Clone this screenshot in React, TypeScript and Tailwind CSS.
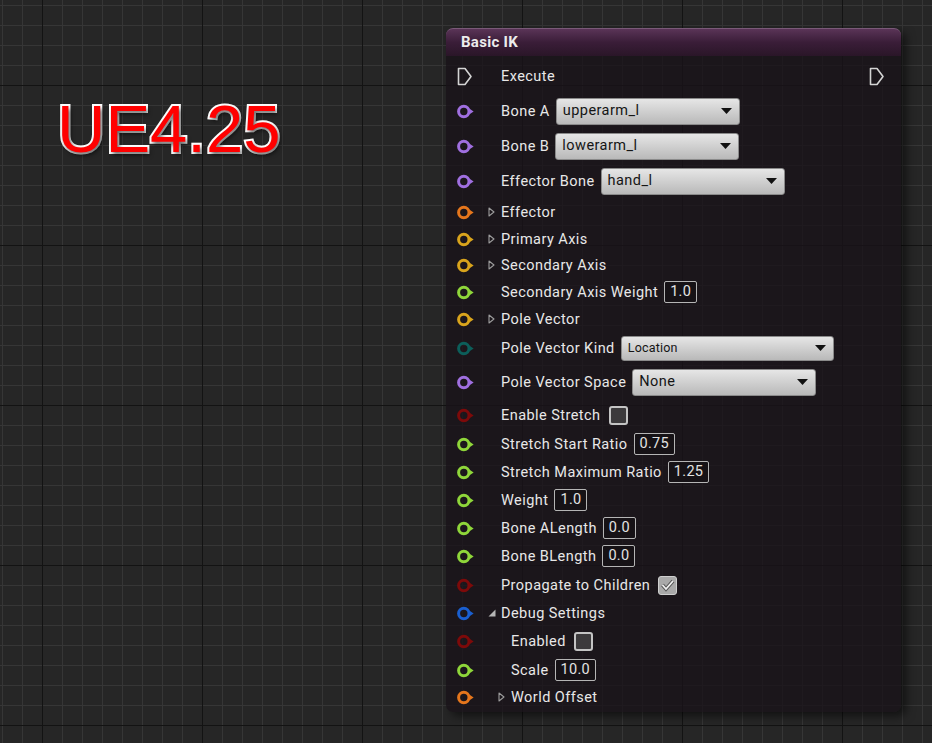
import React from "react"

type Row =
  | { kind: "exec" }
  | { kind: "enum"; label: string; value: string; color: string; w: number; h: number; small?: boolean; rowH: number }
  | { kind: "struct"; label: string; color: string; rowH: number; indent?: number; open?: boolean }
  | { kind: "num"; label: string; value: string; color: string; rowH: number; indent?: number }
  | { kind: "bool"; label: string; checked: boolean; color: string; rowH: number; indent?: number }

const PURPLE = "#a06fe0"
const ORANGE = "#e5761c"
const GOLD = "#d9a41c"
const GREEN = "#8fd63a"
const TEAL = "#0c5e5a"
const RED = "#7d0a0a"
const BLUE = "#1a5fd0"

const rows: Row[] = [
  { kind: "exec" },
  { kind: "enum", label: "Bone A", value: "upperarm_l", color: PURPLE, w: 184, h: 27, rowH: 34 },
  { kind: "enum", label: "Bone B", value: "lowerarm_l", color: PURPLE, w: 184, h: 27, rowH: 36 },
  { kind: "enum", label: "Effector Bone", value: "hand_l", color: PURPLE, w: 184, h: 27, rowH: 34 },
  { kind: "struct", label: "Effector", color: ORANGE, rowH: 28 },
  { kind: "struct", label: "Primary Axis", color: GOLD, rowH: 26 },
  { kind: "struct", label: "Secondary Axis", color: GOLD, rowH: 26 },
  { kind: "num", label: "Secondary Axis Weight", value: "1.0", color: GREEN, rowH: 28 },
  { kind: "struct", label: "Pole Vector", color: GOLD, rowH: 26 },
  { kind: "enum", label: "Pole Vector Kind", value: "Location", color: TEAL, w: 213, h: 25, small: true, rowH: 32 },
  { kind: "enum", label: "Pole Vector Space", value: "None", color: PURPLE, w: 184, h: 27, rowH: 36 },
  { kind: "bool", label: "Enable Stretch", checked: false, color: RED, rowH: 30 },
  { kind: "num", label: "Stretch Start Ratio", value: "0.75", color: GREEN, rowH: 28 },
  { kind: "num", label: "Stretch Maximum Ratio", value: "1.25", color: GREEN, rowH: 28 },
  { kind: "num", label: "Weight", value: "1.0", color: GREEN, rowH: 28 },
  { kind: "num", label: "Bone ALength", value: "0.0", color: GREEN, rowH: 28 },
  { kind: "num", label: "Bone BLength", value: "0.0", color: GREEN, rowH: 28 },
  { kind: "bool", label: "Propagate to Children", checked: true, color: RED, rowH: 30 },
  { kind: "struct", label: "Debug Settings", color: BLUE, rowH: 26, open: true },
  { kind: "bool", label: "Enabled", checked: false, color: RED, rowH: 30, indent: 10 },
  { kind: "num", label: "Scale", value: "10.0", color: GREEN, rowH: 28, indent: 10 },
  { kind: "struct", label: "World Offset", color: ORANGE, rowH: 26, indent: 10 },
]

function Pin({ color }: { color: string }) {
  return (
    <svg width="19" height="15" viewBox="0 0 19 15">
      <circle cx="6.8" cy="7.5" r="5.2" fill="none" stroke={color} strokeWidth="3" />
      <path d="M12.6 4.8 L16.6 7.5 L12.6 10.2 Z" fill={color} />
    </svg>
  )
}

function ExecPin() {
  return (
    <svg width="16" height="19" viewBox="0 0 16 19">
      <path d="M1.5 1.5 H8 L14 9.5 L8 17.5 H1.5 Z" fill="none" stroke="#d4d4d4" strokeWidth="1.6" strokeLinejoin="round" />
    </svg>
  )
}

function Expander({ open }: { open?: boolean }) {
  if (open) {
    return (
      <svg width="8" height="8" viewBox="0 0 8 8">
        <path d="M7.5 0.5 V7.5 H0.5 Z" fill="#b5b5b5" />
      </svg>
    )
  }
  return (
    <svg width="7" height="10" viewBox="0 0 7 10">
      <path d="M1 1 L6 5 L1 9 Z" fill="none" stroke="#9c9c9c" strokeWidth="1.1" strokeLinejoin="round" />
    </svg>
  )
}

function Dropdown({ value, w, h, small }: { value: string; w: number; h: number; small?: boolean }) {
  return (
    <div
      className="ml-[6px] flex items-center justify-between rounded-[3px] border border-[#8a8a8a] bg-gradient-to-b from-[#e6e6e6] to-[#b9b9b9] pl-[6px] pr-[7px] text-[#151515]"
      style={{ width: w, height: h }}
    >
      <span className={small ? "text-[12.5px] tracking-[0.2px]" : "text-[14.5px] tracking-[0.45px]"}>{value}</span>
      <svg width="11" height="6" viewBox="0 0 11 6">
        <path d="M0 0 H11 L5.5 6 Z" fill="#111" />
      </svg>
    </div>
  )
}

function NumBox({ value }: { value: string }) {
  return (
    <div className="ml-[6px] flex h-[22px] items-center rounded-[2px] border-[1.5px] border-[#b5b5b5] bg-[#161216] px-[5px] text-[14.5px] tracking-[0.3px] text-[#e2e2e2]">
      {value}
    </div>
  )
}

function CheckBox({ checked }: { checked: boolean }) {
  if (checked) {
    return (
      <div className="ml-[8px] flex h-[19px] w-[19px] items-center justify-center rounded-[3px] border border-[#cfcfcf] bg-[#a9a9a9]">
        <svg width="15" height="13" viewBox="0 0 15 13">
          <path d="M2.5 6 L6 10 L13 2" fill="none" stroke="#555" strokeWidth="3.6" />
          <path d="M2.5 6 L6 10 L13 2" fill="none" stroke="#f0f0f0" strokeWidth="1.8" />
        </svg>
      </div>
    )
  }
  return <div className="ml-[8px] h-[19px] w-[19px] rounded-[3px] border-2 border-[#c4c4c4] bg-[#3c3a3c]" />
}

function NodeRow({ row }: { row: Row }) {
  if (row.kind === "exec") {
    return (
      <div className="flex h-[36px] items-center justify-between pl-[11px] pr-[16px]">
        <div className="flex items-center">
          <ExecPin />
          <span className="ml-[28px] pt-[2px] text-[14.5px] tracking-[0.45px] text-[#e8e8e8]">Execute</span>
        </div>
        <ExecPin />
      </div>
    )
  }
  const indent = "indent" in row && row.indent ? row.indent : 0
  return (
    <div className="flex items-center" style={{ height: row.rowH }}>
      <div className="w-[42px] pl-[11px]">
        <Pin color={row.color} />
      </div>
      <div className="flex w-[13px] items-center" style={{ marginLeft: row.kind === "struct" ? indent : 0 }}>
        {row.kind === "struct" && <Expander open={row.open} />}
      </div>
      <span
        className="whitespace-nowrap pt-[2px] text-[14.5px] tracking-[0.45px] text-[#e8e8e8]"
        style={{ marginLeft: row.kind === "struct" ? 0 : indent }}
      >
        {row.label}
      </span>
      {row.kind === "enum" && <Dropdown value={row.value} w={row.w} h={row.h} small={row.small} />}
      {row.kind === "num" && <NumBox value={row.value} />}
      {row.kind === "bool" && <CheckBox checked={row.checked} />}
    </div>
  )
}

export default function App() {
  return (
    <div
      className="relative h-[743px] w-[932px] overflow-hidden bg-[#262626] bg-[image:linear-gradient(to_right,#131313_1px,transparent_1px),linear-gradient(to_bottom,#131313_1px,transparent_1px),linear-gradient(to_right,#363636_1px,transparent_1px),linear-gradient(to_bottom,#363636_1px,transparent_1px)] bg-[size:160px_160px,160px_160px,20px_20px,20px_20px] bg-[position:42px_85px,42px_85px,2px_5px,2px_5px]"
      style={{ fontFamily: "Roboto, 'Noto Sans', sans-serif" }}
    >
      <div
        className="absolute left-[57px] top-[95px] text-[67px] leading-none text-[#ff0000] [-webkit-text-stroke:4px_#ffffff] [paint-order:stroke_fill] [text-shadow:2px_3px_4px_rgba(0,0,0,0.6)]"
        style={{ fontFamily: "'Liberation Sans', Arial, sans-serif" }}
      >
        UE4.25
      </div>

      <div className="absolute left-[446px] top-[28px] w-[455px] rounded-[7px] bg-[rgba(24,18,24,0.78)] shadow-[5px_4px_10px_rgba(0,0,0,0.55)]">
        <div className="flex h-[28px] items-center rounded-t-[7px] border-t border-[#7a5a78] bg-gradient-to-b from-[#5a3457] via-[#3a1d38] to-[#2a1628] pl-[15px]">
          <span className="text-[15px] font-bold tracking-[0.3px] text-[#ececec]">Basic IK</span>
        </div>
        <div className="pb-[2px] pt-[2px]">
          {rows.map((r, i) => (
            <NodeRow key={i} row={r} />
          ))}
        </div>
      </div>
    </div>
  )
}
